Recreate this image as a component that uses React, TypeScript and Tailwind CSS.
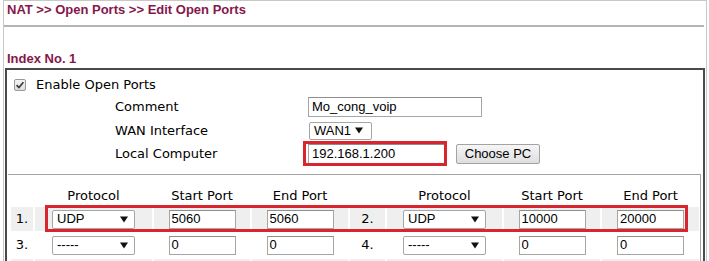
import React from "react";

const Arrow = () => (
  <svg width="8" height="7" viewBox="0 0 8 7" className="shrink-0">
    <path d="M0 0.5 H8 L4 6.5 Z" fill="#111" />
  </svg>
);

function Sel({ value }: { value: string }) {
  return (
    <div className="w-[83px] h-[19px] border border-[#a6a6a6] rounded-[2px] bg-white flex items-center justify-between pl-[4px] pr-[6px] text-[13px] text-black">
      <span>{value}</span>
      <Arrow />
    </div>
  );
}

function Inp({ value }: { value: string }) {
  return (
    <div className="w-[67px] h-[19px] border border-[#a6a6a6] border-t-[#8e8e8e] bg-white flex items-center pl-[2px] text-[13px] text-black">
      {value}
    </div>
  );
}

type RowProps = {
  n1: string; p1: string; s1: string; e1: string;
  n2: string; p2: string; s2: string; e2: string;
  gray: boolean; red?: boolean;
};

function PortRow({ n1, p1, s1, e1, n2, p2, s2, e2, gray, red }: RowProps) {
  const bg = gray ? "bg-[#efefef]" : "bg-white";
  const num = "flex items-center justify-center text-[13px] font-['DejaVu_Sans',sans-serif] text-black " + bg;
  const cell = "flex items-center justify-center " + bg;
  return (
    <div className="relative mt-[2px] h-[24px] grid grid-cols-[22px_117px_96px_96px_35px_115px_96px_97px] gap-x-[2px]">
      <div className={num}>{n1}</div>
      <div className={cell}><Sel value={p1} /></div>
      <div className={cell}><Inp value={s1} /></div>
      <div className={cell}><Inp value={e1} /></div>
      <div className={num}>{n2}</div>
      <div className={cell}><Sel value={p2} /></div>
      <div className={cell}><Inp value={s2} /></div>
      <div className={cell}><Inp value={e2} /></div>
      {red && (
        <div className="absolute left-[34px] top-[-2px] w-[643px] h-[27px] border-[3px] border-[#d7262e] pointer-events-none" />
      )}
    </div>
  );
}

function EmptyRow() {
  const c = "bg-[#efefef]";
  return (
    <div className="mt-[2px] h-[24px] grid grid-cols-[22px_117px_96px_96px_35px_115px_96px_97px] gap-x-[2px]">
      <div className={c} />
      <div className={c} />
      <div className={c} />
      <div className={c} />
      <div className={c} />
      <div className={c} />
      <div className={c} />
      <div className={c} />
    </div>
  );
}

export default function App() {
  const label = "font-['DejaVu_Sans',sans-serif] text-[13px] text-black";
  const head = "flex items-center justify-center pt-[3px] font-['DejaVu_Sans',sans-serif] text-[13px] text-black";
  return (
    <div className="w-[709px] h-[261px] bg-white overflow-hidden font-['Liberation_Sans',Arial,sans-serif]">
      <div className="ml-[3px] w-[704px] h-[300px] border-t border-l border-r border-[#c8c8c8]">
        <div className="h-[19px] leading-[18px] pl-[3px] text-[13px] font-bold text-[#86174b]">
          NAT &gt;&gt; Open Ports &gt;&gt; Edit Open Ports
        </div>
        <div className="mt-[5px] mr-[2px] h-[2px] bg-[#b4b4b4]" />
        <div className="mt-[23px] h-[18px] leading-[18px] pl-[3px] text-[13px] font-bold text-[#86174b]">
          Index No. 1
        </div>
        <div className="ml-[1px] w-[700px] h-[300px] border-2 border-[#4a4a4a]">
          {/* Enable row */}
          <div className="mt-[5px] h-[20px] flex items-center pl-[7px]">
            <svg width="12" height="12" viewBox="0 0 12 12" className="shrink-0">
              <defs>
                <linearGradient id="cbg" x1="0" y1="0" x2="0" y2="1">
                  <stop offset="0" stopColor="#f4f4f4" />
                  <stop offset="1" stopColor="#dcdcdc" />
                </linearGradient>
              </defs>
              <rect x="0.5" y="0.5" width="11" height="11" rx="1.5" fill="url(#cbg)" stroke="#9a9a9a" />
              <path d="M2.6 6.2 L4.9 8.6 L9.4 3.2" fill="none" stroke="#3a3a3a" strokeWidth="1.7" />
            </svg>
            <span className={label + " ml-[10px] leading-[20px]"}>Enable Open Ports</span>
          </div>
          {/* Comment */}
          <div className="mt-[1px] h-[21px] flex items-center pl-[108px]">
            <div className={label + " w-[193px]"}>Comment</div>
            <div className="w-[174px] h-[20px] border border-[#a6a6a6] border-t-[#8e8e8e] bg-white flex items-center pl-[3px] text-[13px] text-black">
              Mo_cong_voip
            </div>
          </div>
          {/* WAN */}
          <div className="mt-[3px] h-[21px] flex items-center pl-[108px]">
            <div className={label + " w-[194px]"}>WAN Interface</div>
            <div className="w-[63px] h-[18px] border border-[#a6a6a6] rounded-[2px] bg-white flex items-center justify-between pl-[4px] pr-[8px] text-[13px] text-black">
              <span>WAN1</span>
              <Arrow />
            </div>
          </div>
          {/* Local computer */}
          <div className="h-[25px] flex items-center pl-[108px]">
            <div className={label + " w-[193px]"}>Local Computer</div>
            <div className="relative">
              <div className="w-[137px] h-[20px] border border-[#a6a6a6] border-t-[#8e8e8e] bg-white flex items-center pl-[3px] text-[13px] text-black">
                192.168.1.200
              </div>
              <div className="absolute left-[-5px] top-[-3px] w-[144px] h-[25px] border-[3px] border-[#d7262e] pointer-events-none" />
            </div>
            <button className="ml-[11px] w-[84px] h-[20px] border border-[#a3a3a3] rounded-[2px] bg-gradient-to-b from-[#f6f6f6] to-[#dedede] text-[13px] text-black flex items-center justify-center">
              Choose PC
            </button>
          </div>
          {/* Port table */}
          <div className="mt-[8px] ml-[1px] mr-[2px] border-t border-r border-[#a4a4a4] pl-[3px] pr-[1px] h-[200px]">
            <div className="mt-[8px] h-[22px] grid grid-cols-[22px_117px_96px_96px_35px_115px_96px_97px] gap-x-[2px]">
              <div />
              <div className={head}>Protocol</div>
              <div className={head}>Start Port</div>
              <div className={head}>End Port</div>
              <div />
              <div className={head}>Protocol</div>
              <div className={head}>Start Port</div>
              <div className={head}>End Port</div>
            </div>
            <PortRow n1="1." p1="UDP" s1="5060" e1="5060" n2="2." p2="UDP" s2="10000" e2="20000" gray red />
            <PortRow n1="3." p1="-----" s1="0" e1="0" n2="4." p2="-----" s2="0" e2="0" gray={false} />
            <EmptyRow />
          </div>
        </div>
      </div>
    </div>
  );
}
